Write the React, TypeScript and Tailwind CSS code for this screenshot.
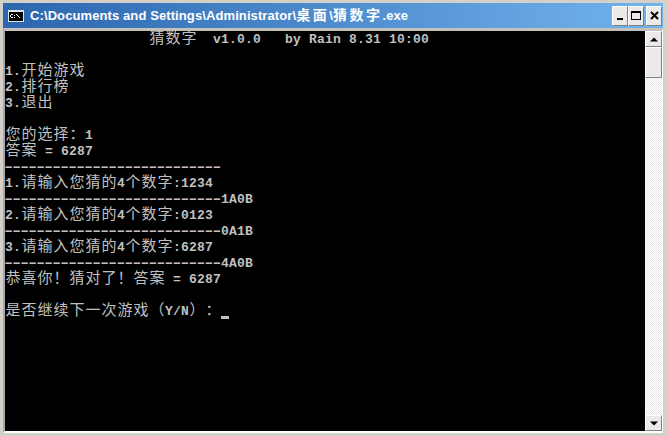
const CJK = /[^\x00-\x7f]/;

function Line({ text, cursor }: { text: string; cursor?: boolean }) {
  return (
    <div className="flex h-4 items-center leading-4 whitespace-pre">
      {text.split(/(-+)/).map((part, p) =>
        part.startsWith("-") ? (
          <span key={p} className="w-[216px] shrink-0 origin-left -translate-x-[3px] scale-x-[1.7] text-[13px] font-bold leading-4 tracking-[-3.09px]">{part}</span>
        ) : (
          Array.from(part).map((c, i) =>
            CJK.test(c) ? (
              <span key={`${p}-${i}`} className="w-4 shrink-0 text-center text-[15px] font-normal leading-4">{c}</span>
            ) : (
              <span key={`${p}-${i}`} className="w-2 shrink-0 text-center text-[13px] font-bold leading-4">{c}</span>
            ),
          )
        ),
      )}
      {cursor && <span className="mb-px h-[3px] w-2 self-end bg-[#c0c0c0]" />}
    </div>
  );
}

const lines = [
  "                  猜数字  v1.0.0   by Rain 8.31 10:00",
  "",
  "1.开始游戏",
  "2.排行榜",
  "3.退出",
  "",
  "您的选择：1",
  "答案 = 6287",
  "---------------------------",
  "1.请输入您猜的4个数字:1234",
  "---------------------------1A0B",
  "2.请输入您猜的4个数字:0123",
  "---------------------------0A1B",
  "3.请输入您猜的4个数字:6287",
  "---------------------------4A0B",
  "恭喜你！猜对了！答案 = 6287",
  "",
];

function TitleBtn({ children }: { children: React.ReactNode }) {
  return (
    <div className="flex h-5 w-4 items-center justify-center border border-t-white border-l-white border-r-[#808080] border-b-[#808080] bg-[#ece9e8]">
      {children}
    </div>
  );
}

function ScrollBtn({ children }: { children: React.ReactNode }) {
  return (
    <div className="flex h-4 w-[17px] shrink-0 items-center justify-center border border-t-white border-l-white border-r-[#808080] border-b-[#808080] bg-[#ece9e8]">
      {children}
    </div>
  );
}

function Arrow({ up }: { up?: boolean }) {
  return (
    <svg width="8" height="5" viewBox="0 0 8 5" fill="#000">
      <path d={up ? "M4 0.5 L8 4.5 L0 4.5 Z" : "M0 0.5 L8 0.5 L4 4.5 Z"} />
    </svg>
  );
}

export default function App() {
  return (
    <div className="flex h-[436px] w-[667px] flex-col overflow-hidden bg-[#d4d0c8] pb-[3px] pl-[3px] pr-[4px] pt-[3px]">
      <div className="flex h-[25px] shrink-0 items-center bg-gradient-to-r from-[#2c66ae] to-[#72b4ee] pl-[5px] pr-px">
        <svg width="16" height="12" viewBox="0 0 16 12" className="shrink-0">
          <rect width="16" height="12" fill="#dfe3ea" />
          <rect x="1" y="2" width="14" height="9" fill="#000" />
          <path d="M3 4h2v1H3zM2 5h1v2H2zM3 7h2v1H3zM6 5h1v1H6zM6 7h1v1H6zM8 4h1v1H8zM9 5h1v1H9zM10 6h1v1h-1zM11 7h1v1h-1z" fill="#fff" />
        </svg>
        <div className="ml-[6px] flex-1 font-['Liberation_Sans','Noto_Sans_CJK_SC',sans-serif] text-[13px] font-bold tracking-[0.1px] whitespace-pre text-white">
          C:\Documents and Settings\Administrator\<span className="text-[14px] tracking-[2.5px]">桌面</span>\<span className="text-[14px] tracking-[2.5px]">猜数字</span>.exe
        </div>
        <TitleBtn><div className="mt-[7px] h-0.5 w-[6px] bg-black" /></TitleBtn>
        <TitleBtn><div className="h-[9px] w-[10px] border border-t-2 border-black" /></TitleBtn>
        <div className="ml-0.5">
          <TitleBtn>
            <svg width="9" height="9" viewBox="0 0 9 9"><path d="M1 1 L8 8 M8 1 L1 8" stroke="#000" strokeWidth="2" /></svg>
          </TitleBtn>
        </div>
      </div>
      <div className="flex min-h-0 flex-1 border-t-[3px] border-r border-b-2 border-l-2 border-t-[#c4c1ba] border-r-white border-b-white border-l-[#a9a6b0]">
        <div className="flex-1 bg-black pt-px font-['Liberation_Mono','Noto_Sans_CJK_SC',monospace] text-[#c0c0c0]">
          {lines.map((l, i) => (
            <Line key={i} text={l} />
          ))}
          <Line text="是否继续下一次游戏（Y/N）：" cursor />
        </div>
        <div className="flex w-[17px] shrink-0 flex-col">
          <ScrollBtn><Arrow up /></ScrollBtn>
          <div className="h-[31px] w-[17px] shrink-0 border border-t-white border-l-white border-r-[#808080] border-b-[#808080] bg-[#ece9e8]" />
          <div className="flex-1 bg-[repeating-conic-gradient(#ece9e8_0_25%,#ffffff_0_50%)] bg-[length:2px_2px]" />
          <ScrollBtn><Arrow /></ScrollBtn>
        </div>
      </div>
    </div>
  );
}
